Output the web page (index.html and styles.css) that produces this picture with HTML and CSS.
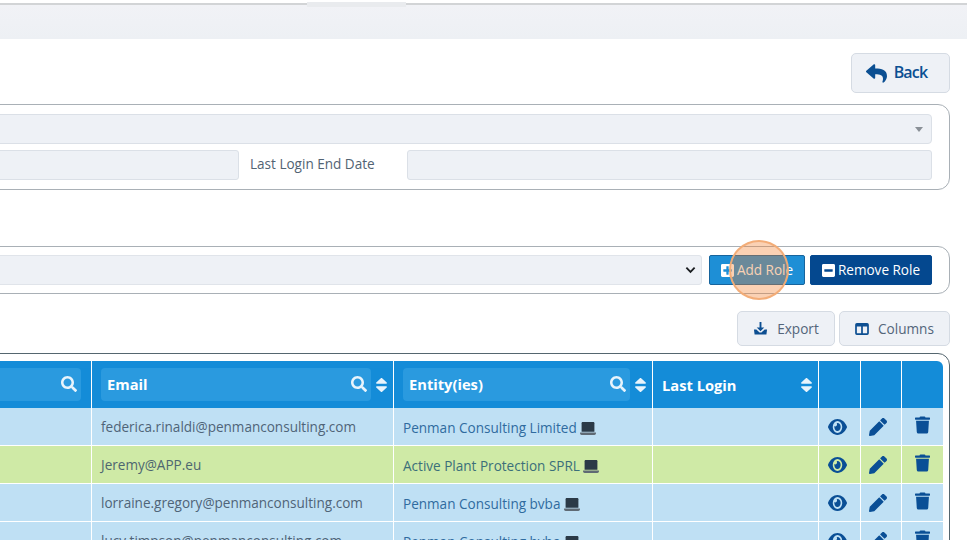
FILE: index.html
```html
<!DOCTYPE html>
<html lang="en">
<head>
<meta charset="utf-8">
<title>Users</title>
<link rel="stylesheet" href="styles.css">
</head>
<body>
<svg class="defs" aria-hidden="true">
  <defs>
    <symbol id="i-reply" viewBox="0 0 512 512"><path d="M8.309 189.836L184.313 37.851C199.719 24.546 224 35.347 224 56.015v80.053c160.629 1.839 288 34.032 288 186.258 0 61.441-39.581 122.309-83.333 154.132-13.653 9.931-33.111-2.533-28.077-18.631 45.344-145.012-21.507-183.51-176.59-185.742V360c0 20.7-24.3 31.453-39.687 18.164l-176.004-152c-11.071-9.562-11.086-26.753 0-36.328z"/></symbol>
    <symbol id="i-search" viewBox="0 0 512 512"><path d="M505 442.7L405.3 343c-4.5-4.5-10.6-7-17-7H372c27.6-35.3 44-79.7 44-128C416 93.1 322.9 0 208 0S0 93.1 0 208s93.1 208 208 208c48.3 0 92.7-16.4 128-44v16.3c0 6.4 2.5 12.5 7 17l99.7 99.7c9.4 9.4 24.6 9.4 33.9 0l28.3-28.3c9.4-9.4 9.4-24.6.1-34zM208 336c-70.7 0-128-57.2-128-128 0-70.7 57.2-128 128-128 70.7 0 128 57.2 128 128 0 70.7-57.2 128-128 128z"/></symbol>
    <symbol id="i-sort" viewBox="17 57 286 398" preserveAspectRatio="none"><path d="M41 288h238c21.4 0 32.1 25.9 17 41L177 448c-9.4 9.4-24.6 9.4-33.9 0L24 329c-15.1-15.1-4.4-41 17-41zm255-105L177 64c-9.4-9.4-24.6-9.4-33.9 0L24 183c-15.1 15.1-4.4 41 17 41h238c21.4 0 32.1-25.9 17-41z"/></symbol>
    <symbol id="i-eye" viewBox="0 64 576 384" preserveAspectRatio="none"><path d="M572.52 241.4C518.29 135.59 410.93 64 288 64S57.68 135.64 3.48 241.41a32.35 32.35 0 0 0 0 29.19C57.71 376.41 165.07 448 288 448s230.32-71.64 284.52-177.41a32.35 32.35 0 0 0 0-29.19zM288 400a144 144 0 1 1 144-144 143.93 143.93 0 0 1-144 144zm0-240a95.31 95.31 0 0 0-25.31 3.79 47.85 47.85 0 0 1-66.9 66.9A95.78 95.78 0 1 0 288 160z"/></symbol>
    <symbol id="i-pencil" viewBox="0 0 512 512"><path d="M497.9 142.1l-46.1 46.1c-4.7 4.7-12.3 4.7-17 0l-111-111c-4.7-4.7-4.7-12.3 0-17l46.1-46.1c18.7-18.7 49.1-18.7 67.9 0l60.1 60.1c18.8 18.7 18.8 49.1 0 67.9zM284.2 99.8L21.6 362.4.4 483.9c-2.9 16.4 11.4 30.6 27.8 27.8l121.5-21.3 262.6-262.6c4.7-4.7 4.7-12.3 0-17l-111-111c-4.8-4.7-12.4-4.7-17.1 0z"/></symbol>
    <symbol id="i-trash" viewBox="0 0 448 512"><path d="M432 32H312l-9.4-18.7A24 24 0 0 0 281.1 0H166.8a23.72 23.72 0 0 0-21.4 13.3L136 32H16A16 16 0 0 0 0 48v32a16 16 0 0 0 16 16h416a16 16 0 0 0 16-16V48a16 16 0 0 0-16-16zM53.2 467a48 48 0 0 0 47.9 45h245.8a48 48 0 0 0 47.9-45L416 128H32z"/></symbol>
    <symbol id="i-laptop" viewBox="0 0 640 512"><path fill="#5f6a74" d="M624 416H16c-8.800 0-16 7.200-16 16v16c0 35.200 28.800 64 64 64h512c35.200 0 64-28.800 64-64v-16c0-8.800-7.200-16-16-16z"/><path d="M576 48c0-26.400-21.600-48-48-48H112C85.600 0 64 21.600 64 48v336h512V48z"/></symbol>
    <symbol id="i-plus" viewBox="0 0 448 512"><path d="M400 32H48C21.5 32 0 53.5 0 80v352c0 26.5 21.5 48 48 48h352c26.5 0 48-21.5 48-48V80c0-26.5-21.5-48-48-48zm-32 252c0 6.6-5.4 12-12 12h-92v92c0 6.6-5.4 12-12 12h-56c-6.6 0-12-5.4-12-12v-92H92c-6.6 0-12-5.4-12-12v-56c0-6.6 5.4-12 12-12h92v-92c0-6.6 5.4-12 12-12h56c6.6 0 12 5.4 12 12v92h92c6.6 0 12 5.4 12 12v56z"/></symbol>
    <symbol id="i-minus" viewBox="0 0 448 512"><path d="M400 32H48C21.5 32 0 53.5 0 80v352c0 26.5 21.5 48 48 48h352c26.5 0 48-21.5 48-48V80c0-26.5-21.5-48-48-48zM92 296c-6.6 0-12-5.4-12-12v-56c0-6.6 5.4-12 12-12h264c6.6 0 12 5.4 12 12v56c0 6.6-5.4 12-12 12H92z"/></symbol>
    <symbol id="i-export" viewBox="0 0 16 16"><path d="M7 1h2v6h3L8 11 4 7h3zM1 9h2.600L7 12.200h2L12.400 9H15l-.7 5.300H1.700z"/></symbol>
    <symbol id="i-columns" viewBox="0 0 16 14"><path fill-rule="evenodd" d="M2 0h12a2 2 0 0 1 2 2v10a2 2 0 0 1-2 2H2a2 2 0 0 1-2-2V2a2 2 0 0 1 2-2zm0 4v8h5V4zm7 0v8h5V4z"/></symbol>
  </defs>
</svg>

<div class="page">
  <div class="topbar"><span class="tab-edge"></span></div>

  <main class="content">
    <div class="back-row">
      <button class="btn btn-back" type="button"><svg class="ic ic-back"><use href="#i-reply"/></svg><span class="back-label">Back</span></button>
    </div>

    <section class="panel panel-filter">
      <div class="fake-select"><span class="caret"></span></div>
      <div class="date-row">
        <div class="field field-start"></div>
        <span class="field-label">Last Login End Date</span>
        <div class="field field-end"></div>
      </div>
    </section>

    <section class="panel panel-role">
      <div class="role-select"><svg class="chev" viewBox="0 0 12 8"><path d="M1.500 1.500 6 6l4.500-4.500"/></svg></div>
      <button class="btn-role btn-add" type="button"><svg class="ic ic-role"><use href="#i-plus"/></svg>Add Role</button>
      <button class="btn-role btn-remove" type="button"><svg class="ic ic-role"><use href="#i-minus"/></svg>Remove Role</button>
      <span class="cursor-ring"></span>
    </section>

    <div class="tools">
      <button class="btn btn-tool btn-export" type="button"><svg class="ic ic-export"><use href="#i-export"/></svg>Export</button>
      <button class="btn btn-tool btn-columns" type="button"><svg class="ic ic-columns"><use href="#i-columns"/></svg>Columns</button>
    </div>

    <section class="panel panel-table">
      <table class="grid">
        <colgroup>
          <col class="c1"><col class="c2"><col class="c3"><col class="c4"><col class="c5"><col class="c6"><col class="c7">
        </colgroup>
        <thead>
          <tr>
            <th><div class="th-in"><div class="pill"><span></span><svg class="ic ic-search"><use href="#i-search"/></svg></div></div></th>
            <th><div class="th-in"><div class="pill"><span>Email</span><svg class="ic ic-search"><use href="#i-search"/></svg></div><svg class="ic ic-sort"><use href="#i-sort"/></svg></div></th>
            <th><div class="th-in"><div class="pill"><span>Entity(ies)</span><svg class="ic ic-search"><use href="#i-search"/></svg></div><svg class="ic ic-sort"><use href="#i-sort"/></svg></div></th>
            <th><div class="th-plain"><span>Last Login</span><svg class="ic ic-sort"><use href="#i-sort"/></svg></div></th>
            <th></th><th></th><th></th>
          </tr>
        </thead>
        <tbody>
          <tr class="blue">
            <td></td><td class="email">federica.rinaldi@penmanconsulting.com</td>
            <td class="entity">Penman Consulting Limited <svg class="ic ic-laptop"><use href="#i-laptop"/></svg></td><td></td>
            <td class="act"><svg class="ic ic-eye"><use href="#i-eye"/></svg></td>
            <td class="act"><svg class="ic ic-pencil"><use href="#i-pencil"/></svg></td>
            <td class="act"><svg class="ic ic-trash"><use href="#i-trash"/></svg></td>
          </tr>
          <tr class="green">
            <td></td><td class="email">Jeremy@APP.eu</td>
            <td class="entity">Active Plant Protection SPRL <svg class="ic ic-laptop"><use href="#i-laptop"/></svg></td><td></td>
            <td class="act"><svg class="ic ic-eye"><use href="#i-eye"/></svg></td>
            <td class="act"><svg class="ic ic-pencil"><use href="#i-pencil"/></svg></td>
            <td class="act"><svg class="ic ic-trash"><use href="#i-trash"/></svg></td>
          </tr>
          <tr class="blue">
            <td></td><td class="email">lorraine.gregory@penmanconsulting.com</td>
            <td class="entity">Penman Consulting bvba <svg class="ic ic-laptop"><use href="#i-laptop"/></svg></td><td></td>
            <td class="act"><svg class="ic ic-eye"><use href="#i-eye"/></svg></td>
            <td class="act"><svg class="ic ic-pencil"><use href="#i-pencil"/></svg></td>
            <td class="act"><svg class="ic ic-trash"><use href="#i-trash"/></svg></td>
          </tr>
          <tr class="blue">
            <td></td><td class="email">lucy.timpson@penmanconsulting.com</td>
            <td class="entity">Penman Consulting bvba <svg class="ic ic-laptop"><use href="#i-laptop"/></svg></td><td></td>
            <td class="act"><svg class="ic ic-eye"><use href="#i-eye"/></svg></td>
            <td class="act"><svg class="ic ic-pencil"><use href="#i-pencil"/></svg></td>
            <td class="act"><svg class="ic ic-trash"><use href="#i-trash"/></svg></td>
          </tr>
        </tbody>
      </table>
    </section>
  </main>
</div>
</body>
</html>
```
FILE: styles.css
```css
html, body {
  margin: 0;
  height: 100%;
  overflow: hidden;
  background: #fff;
}

body {
  font-family: "Open Sans", "Noto Sans", sans-serif;
  font-size: 13.55px;
  color: #4b5f72;
}

.defs {
  display: none;
}

.page {
  width: 967px;
  height: 540px;
  overflow: hidden;
}

.ic {
  display: block;
  fill: currentColor;
  flex: none;
}

/* top strip */
.topbar {
  position: relative;
  height: 34px;
  margin-top: 3px;
  border-top: 2px solid #d2d4d6;
  background: linear-gradient(#f1f2f6 0, #edf0f4 100%);
}

.tab-edge {
  position: absolute;
  left: 307px;
  top: -3px;
  width: 99px;
  height: 5px;
  background: #e9ebee;
}

.content {
  margin-left: -20px;
  margin-right: 17px;
}

.back-row {
  display: flex;
  justify-content: flex-end;
  padding-top: 14px;
}

.btn {
  display: flex;
  align-items: center;
  justify-content: center;
  padding: 0;
  font-family: inherit;
  background: #eef1f6;
  border: 1px solid #d5dbe3;
  border-radius: 5px;
}

.btn-back {
  width: 99px;
  height: 40px;
  gap: 7px;
  padding-right: 8px;
  font-size: 16px;
  font-weight: 600;
  letter-spacing: -0.8px;
  color: #0b4f92;
}

.back-label {
  margin-bottom: 2px;
}

.ic-back {
  width: 21px;
  height: 21px;
}

.panel {
  box-sizing: border-box;
  background: #fff;
  border: 1px solid #a9b0b6;
  border-radius: 12px;
}

/* filter panel */
.panel-filter {
  height: 86px;
  margin-top: 11px;
  padding: 9px 17px 9px 9px;
}

.fake-select {
  position: relative;
  box-sizing: border-box;
  height: 30px;
  background: #eef1f6;
  border: 1px solid #dbe0e7;
  border-radius: 4px;
}

.caret {
  position: absolute;
  right: 8px;
  top: 12px;
  border-left: 4px solid transparent;
  border-right: 4px solid transparent;
  border-top: 5px solid #8a9097;
}

.date-row {
  display: flex;
  align-items: center;
  margin-top: 6px;
  height: 30px;
}

.field {
  box-sizing: border-box;
  height: 30px;
  background: #eef1f6;
  border: 1px solid #dbe0e7;
  border-radius: 3px;
}

.field-start {
  flex: 1;
}

.field-label {
  width: 168px;
  padding: 0 0 3px 11px;
  box-sizing: border-box;
  color: #526373;
}

.field-end {
  width: 525px;
}

/* role panel */
.panel-role {
  position: relative;
  display: flex;
  align-items: center;
  height: 48px;
  margin-top: 56px;
  padding: 0 17px 0 9px;
}

.role-select {
  flex: 1;
  box-sizing: border-box;
  height: 30px;
  display: flex;
  align-items: center;
  justify-content: flex-end;
  padding-right: 5px;
  margin-right: 7px;
  background: #eef1f6;
  border: 1px solid #e0e4ea;
  border-radius: 3px;
}

.chev {
  width: 11px;
  height: 8px;
  fill: none;
  stroke: #1a1d20;
  stroke-width: 2;
}

.btn-role {
  display: flex;
  align-items: center;
  justify-content: center;
  gap: 3px;
  height: 30px;
  padding: 0;
  font-family: inherit;
  font-size: 13.55px;
  color: #fff;
  border-radius: 2px;
}

.btn-add {
  width: 96px;
  background: #1e8fd6;
  border: 1px solid #17649c;
}

.btn-remove {
  width: 122px;
  margin-left: 5px;
  background: #04488f;
  border: 1px solid #04488f;
}

.ic-role {
  width: 13px;
  height: 15px;
}

.cursor-ring {
  position: absolute;
  right: 160px;
  top: -7px;
  box-sizing: border-box;
  width: 60px;
  height: 60px;
  border-radius: 50%;
  background: rgba(240, 128, 48, 0.36);
  border: 2px solid rgba(243, 172, 118, 0.95);
}

/* tools */
.tools {
  display: flex;
  justify-content: flex-end;
  gap: 4px;
  margin-top: 17px;
}

.btn-tool {
  height: 35px;
  gap: 9px;
  font-size: 13.6px;
  color: #53657a;
}

.btn-export {
  width: 98px;
}

.btn-columns {
  width: 111px;
}

.ic-export {
  width: 15px;
  height: 15px;
  color: #0d4f92;
}

.ic-columns {
  width: 14px;
  height: 12px;
  color: #0d4f92;
}

/* table */
.panel-table {
  margin-top: 7px;
  height: 220px;
  padding: 7px 6px 0;
  border-color: #55666f;
}

.grid {
  width: 956px;
  table-layout: fixed;
  border-collapse: separate;
  border-spacing: 0;
}

.c1 { width: 105px; }
.c2 { width: 302px; }
.c3 { width: 259px; }
.c4 { width: 166px; }
.c5 { width: 42px; }
.c6 { width: 41px; }
.c7 { width: 41px; }

th {
  height: 47px;
  padding: 0;
  box-sizing: border-box;
  color: #fff;
  font-size: 14.7px;
  font-weight: 700;
  text-align: left;
  background: #148cd8;
  border-right: 1px solid #fff;
}

th:last-child {
  border-right: 0;
  border-top-right-radius: 6px;
}

.th-in {
  display: flex;
  align-items: center;
  gap: 5px;
  height: 33px;
  padding: 0 6px 0 9px;
}

th:first-child .th-in {
  padding-right: 10px;
}

.pill {
  flex: 1;
  display: flex;
  align-items: center;
  justify-content: space-between;
  height: 33px;
  padding: 0 4px 2px 6px;
  box-sizing: border-box;
  background: #2a9adf;
  border-radius: 4px;
}

.th-plain {
  display: flex;
  align-items: center;
  justify-content: space-between;
  padding: 0 6px 0 9px;
}

.ic-search {
  width: 16px;
  height: 16px;
  color: #e8f4fc;
}

.ic-sort {
  width: 11px;
  height: 14px;
  color: #e8f4fc;
}

td {
  height: 38px;
  padding: 0;
  box-sizing: border-box;
  border-right: 1px solid #fff;
  border-bottom: 1px solid #fff;
}

td:last-child {
  border-right: 0;
}

.blue td {
  background: #bfe0f4;
}

.green td {
  background: #cfeaa6;
}

.email {
  padding-left: 9px;
  color: #4f6478;
  white-space: nowrap;
}

.entity {
  padding: 2px 0 0 9px;
  color: #2f6b9f;
  white-space: nowrap;
}

.green .entity {
  color: #3b6f7a;
}

.green .email {
  color: #4d6670;
}

.entity .ic-laptop {
  display: inline-block;
  vertical-align: -2px;
  width: 16px;
  height: 13px;
  color: #2b3a47;
}

.act .ic {
  color: #0a4f96;
}

.ic-eye {
  width: 19px;
  height: 16px;
  margin-left: 9px;
}

.ic-pencil {
  width: 18px;
  height: 18px;
  margin-left: 8px;
}

.ic-trash {
  width: 15px;
  height: 18px;
  margin: 0 0 4px 13px;
}
```
